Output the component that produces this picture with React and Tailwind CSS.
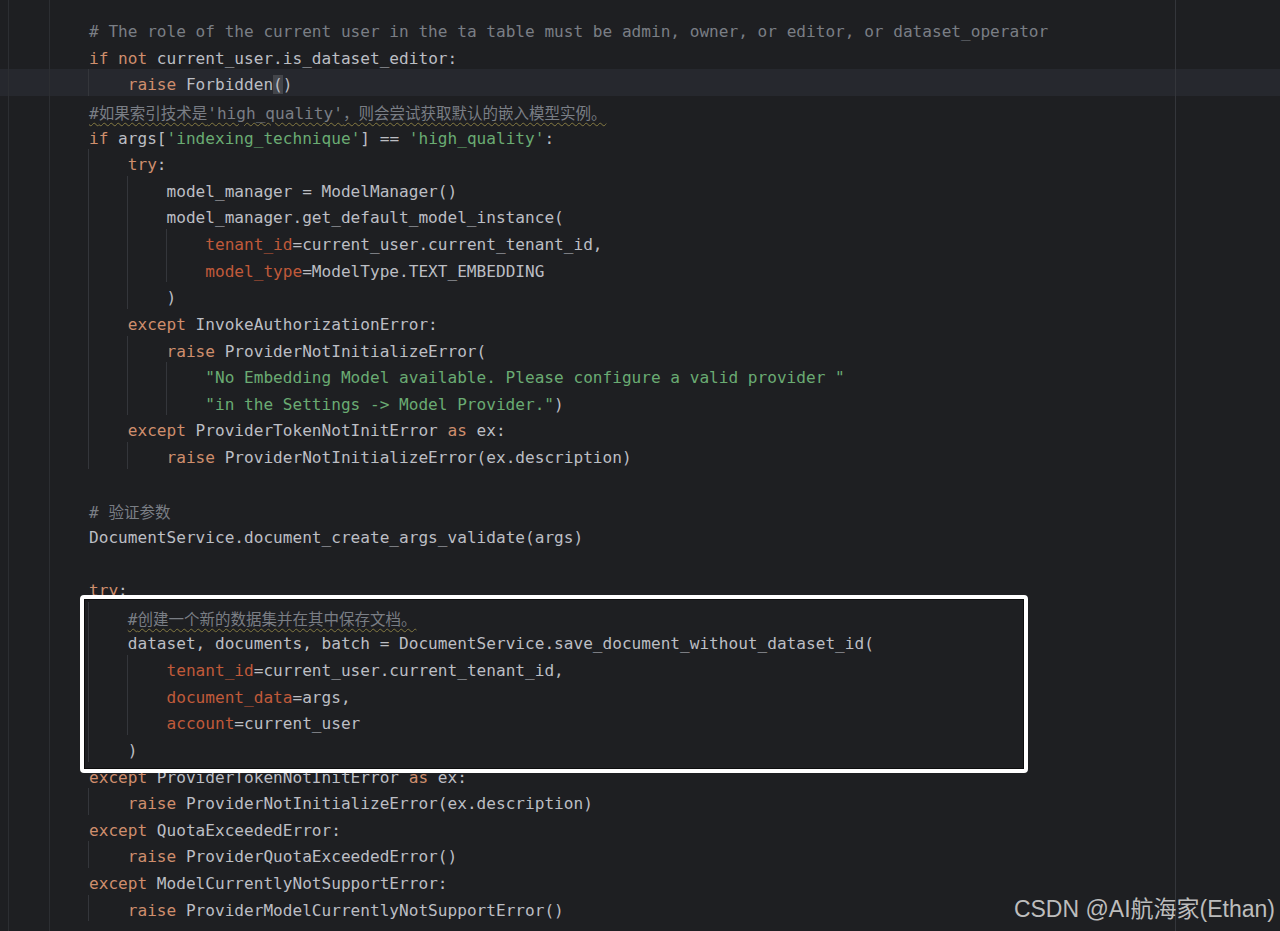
import React from 'react';

// token kinds: k keyword, d default, s string, c comment, n named arg, u comment w/ typo underline, b matched bracket
const lines = [
  { i: 0, t: [['c', '# The role of the current user in the ta table must be admin, owner, or editor, or dataset_operator']] },
  { i: 0, t: [['k', 'if not '], ['d', 'current_user.is_dataset_editor:']] },
  { i: 1, hl: true, t: [['k', 'raise '], ['d', 'Forbidden'], ['b', '('], ['d', ')']] },
  { i: 0, t: [['u', "#如果索引技术是'high_quality'，则会尝试获取默认的嵌入模型实例。"]] },
  { i: 0, t: [['k', 'if '], ['d', 'args['], ['s', "'indexing_technique'"], ['d', '] == '], ['s', "'high_quality'"], ['d', ':']] },
  { i: 1, t: [['k', 'try'], ['d', ':']] },
  { i: 2, t: [['d', 'model_manager = ModelManager()']] },
  { i: 2, t: [['d', 'model_manager.get_default_model_instance(']] },
  { i: 3, t: [['n', 'tenant_id'], ['d', '=current_user.current_tenant_id,']] },
  { i: 3, t: [['n', 'model_type'], ['d', '=ModelType.TEXT_EMBEDDING']] },
  { i: 2, t: [['d', ')']] },
  { i: 1, t: [['k', 'except '], ['d', 'InvokeAuthorizationError:']] },
  { i: 2, t: [['k', 'raise '], ['d', 'ProviderNotInitializeError(']] },
  { i: 3, t: [['s', '"No Embedding Model available. Please configure a valid provider "']] },
  { i: 3, t: [['s', '"in the Settings -> Model Provider."'], ['d', ')']] },
  { i: 1, t: [['k', 'except '], ['d', 'ProviderTokenNotInitError '], ['k', 'as '], ['d', 'ex:']] },
  { i: 2, t: [['k', 'raise '], ['d', 'ProviderNotInitializeError(ex.description)']] },
  { i: 0, t: [] },
  { i: 0, t: [['c', '# 验证参数']] },
  { i: 0, t: [['d', 'DocumentService.document_create_args_validate(args)']] },
  { i: 0, t: [] },
  { i: 0, t: [['k', 'try'], ['d', ':']] },
  { i: 1, t: [['u', '#创建一个新的数据集并在其中保存文档。']] },
  { i: 1, t: [['d', 'dataset, documents, batch = DocumentService.save_document_without_dataset_id(']] },
  { i: 2, t: [['n', 'tenant_id'], ['d', '=current_user.current_tenant_id,']] },
  { i: 2, t: [['n', 'document_data'], ['d', '=args,']] },
  { i: 2, t: [['n', 'account'], ['d', '=current_user']] },
  { i: 1, t: [['d', ')']] },
  { i: 0, t: [['k', 'except '], ['d', 'ProviderTokenNotInitError '], ['k', 'as '], ['d', 'ex:']] },
  { i: 1, t: [['k', 'raise '], ['d', 'ProviderNotInitializeError(ex.description)']] },
  { i: 0, t: [['k', 'except '], ['d', 'QuotaExceededError:']] },
  { i: 1, t: [['k', 'raise '], ['d', 'ProviderQuotaExceededError()']] },
  { i: 0, t: [['k', 'except '], ['d', 'ModelCurrentlyNotSupportError:']] },
  { i: 1, t: [['k', 'raise '], ['d', 'ProviderModelCurrentlyNotSupportError()']] },
];

const colors = {
  k: 'text-[#cf8e6d]',
  d: 'text-[#bcbec4]',
  s: 'text-[#6aab73]',
  c: 'text-[#7a7e85]',
  n: 'text-[#c05a3a]',
  u: 'text-[#7a7e85] underline decoration-wavy decoration-[#857a42] decoration-1 underline-offset-[3px]',
  b: 'text-[#bcbec4] bg-[#43454a]',
};

// split CJK runs so they can use the CJK font at a slightly smaller size
function Runs({ text }) {
  const parts = text.split(/([\u3000-\u303f\u4e00-\u9fff\uff00-\uffef]+)/);
  return parts.map((p, idx) =>
    idx % 2 === 1 ? (
      <span key={idx} className="font-['Noto_Sans_CJK_SC',sans-serif] text-[15.5px]">
        {p}
      </span>
    ) : (
      <React.Fragment key={idx}>{p}</React.Fragment>
    )
  );
}

function Row({ className = '', children }) {
  return (
    <div className={`flex shrink-0 ${className}`}>
      <div className="w-[9px] shrink-0 border-r border-[#2c2e32]" />
      <div className="w-[41px] shrink-0 border-r border-[#2c2e32]" />
      <div className="w-[1126px] shrink-0 flex pl-[38px] border-r border-[#34363b]">{children}</div>
      <div className="flex-1" />
    </div>
  );
}

export default function App() {
  return (
    <div className="relative w-[1280px] h-[931px] overflow-hidden bg-[#1e1f22] flex flex-col font-['DejaVu_Sans_Mono','Noto_Sans_CJK_SC',monospace] text-[16.1px]">
      <Row className="h-[16px]" />
      {lines.map((line, n) => (
        <Row key={n} className={line.hl ? 'h-[26.64px] bg-[#26282e]' : 'h-[26.64px]'}>
          {Array.from({ length: line.i }).map((_, g) => (
            <span key={g} className="w-[4ch] shrink-0 border-l border-[#34363b]" />
          ))}
          <span className="whitespace-pre leading-[26.64px] pl-px pt-[3px]">
            {line.t.map(([kind, text], j) => (
              <span key={j} className={colors[kind]}>
                <Runs text={text} />
              </span>
            ))}
          </span>
        </Row>
      ))}
      <Row className="flex-1" />

      {/* annotation box drawn over the code */}
      <div className="absolute left-[80px] top-[595px] w-[948px] h-[178px] rounded-[4px] border-4 border-white shadow-[inset_0_0_0_1px_#0c0c0d]" />

      {/* watermark */}
      <div className="absolute right-[5px] bottom-[8px] leading-[28px] text-[23px] text-[#bdbdbd] font-['Liberation_Sans','Noto_Sans_CJK_SC',sans-serif]">
        CSDN @AI航海家(Ethan)
      </div>
    </div>
  );
}
